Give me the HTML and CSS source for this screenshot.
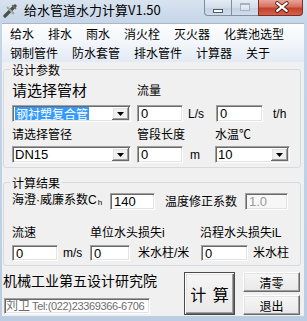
FILE: index.html
```html
<!DOCTYPE html>
<html lang="zh-CN">
<head>
<meta charset="utf-8">
<title>给水管道水力计算V1.50</title>
<link rel="stylesheet" href="styles.css">
</head>
<body>
<div class="window">
  <div class="titlebar">
    <svg class="app-icon" width="15" height="15" viewBox="0 0 15 15">
      <path d="M2 13 L12 3" stroke="#4b4f4b" stroke-width="3.2" stroke-linecap="round"/>
      <path d="M4 4 L11 11" stroke="#9aa79a" stroke-width="2"/>
      <path d="M9 2 L13 6" stroke="#6c746c" stroke-width="1.5"/>
    </svg>
    <span class="title">给水管道水力计算V1.50</span>
    <div class="caption">
      <div class="cb min"><span class="min-glyph"></span></div>
      <div class="cb max"><span class="max-glyph"></span></div>
      <div class="cb close">
        <svg width="45" height="16" viewBox="0 0 45 16">
          <path d="M19 3 L29 11 M29 3 L19 11" stroke="#4a1d16" stroke-width="4.2" stroke-linecap="round"/>
          <path d="M19 3 L29 11 M29 3 L19 11" stroke="#ffffff" stroke-width="2.4" stroke-linecap="round"/>
        </svg>
      </div>
    </div>
  </div>

  <div class="client">
    <div class="menubar">
      <div class="menu-row">
        <span class="mi">给水</span><span class="mi">排水</span><span class="mi">雨水</span><span class="mi">消火栓</span><span class="mi">灭火器</span><span class="mi">化粪池选型</span>
      </div>
      <div class="menu-row">
        <span class="mi">钢制管件</span><span class="mi">防水套管</span><span class="mi">排水管件</span><span class="mi">计算器</span><span class="mi">关于</span>
      </div>
    </div>

    <fieldset class="group g1">
      <legend>设计参数</legend>
      <div class="row lab-row-a">
        <span class="cell lab-big w125">请选择管材</span>
        <span class="cell">流量</span>
      </div>
      <div class="row ctl-row-a">
        <div class="combo w119"><span class="val"><span class="sel">钢衬塑复合管</span></span><span class="drop"><svg width="7" height="4" viewBox="0 0 7 4"><polygon points="0,0 7,0 3.5,4" fill="#000"/></svg></span></div>
        <div class="edit w46 ml6">0</div>
        <span class="cell unit ml5 w28">L/s</span>
        <div class="edit w47">0</div>
        <span class="cell unit ml10">t/h</span>
      </div>
      <div class="row lab-row-b">
        <span class="cell w125">请选择管径</span>
        <span class="cell w78">管段长度</span>
        <span class="cell">水温℃</span>
      </div>
      <div class="row ctl-row-b">
        <div class="combo w119"><span class="val">DN15</span><span class="drop"><svg width="7" height="4" viewBox="0 0 7 4"><polygon points="0,0 7,0 3.5,4" fill="#000"/></svg></span></div>
        <div class="edit w46 ml6">0</div>
        <span class="cell unit ml7 w25">m</span>
        <div class="combo w75"><span class="val">10</span><span class="drop"><svg width="7" height="4" viewBox="0 0 7 4"><polygon points="0,0 7,0 3.5,4" fill="#000"/></svg></span></div>
      </div>
    </fieldset>

    <fieldset class="group g2">
      <legend>计算结果</legend>
      <div class="row res-row-a">
        <span class="cell w98">海澄·威廉系数C<sub class="sub">h</sub></span>
        <div class="edit w45">140</div>
        <span class="cell ml10 w80">温度修正系数</span>
        <div class="edit w43 disabled">1.0</div>
      </div>
      <div class="row res-row-b">
        <span class="cell w78">流速</span>
        <span class="cell w110">单位水头损失i</span>
        <span class="cell">沿程水头损失iL</span>
      </div>
      <div class="row res-row-c">
        <div class="edit w46 short">0</div>
        <span class="cell unit ml5 w27">m/s</span>
        <div class="edit w40 short">0</div>
        <span class="cell ml8 w63">米水柱/米</span>
        <div class="edit w47 short">0</div>
        <span class="cell ml5">米水柱</span>
      </div>
    </fieldset>

    <div class="bottom">
      <div class="left-col">
        <div class="org">机械工业第五设计研究院</div>
        <div class="edit contact">刘卫 <span class="tel">Tel:(022)23369366-6706</span></div>
      </div>
      <div class="btn default calc">计 算</div>
      <div class="side-btns">
        <div class="btn small">清零</div>
        <div class="btn small">退出</div>
      </div>
    </div>
  </div>
</div>
</body>
</html>
```

FILE: styles.css
```css
* { box-sizing: border-box; }
html, body { margin: 0; padding: 0; }
body {
  width: 307px;
  height: 321px;
  overflow: hidden;
  font-family: "Liberation Sans", "Noto Sans CJK SC", sans-serif;
  font-size: 12px;
  color: #000;
}
.window {
  width: 307px;
  height: 321px;
  display: flex;
  flex-direction: column;
  padding: 0 3px 5px 2px;
  background: linear-gradient(to bottom, #d9e3ef 0px, #c6d5e8 22px, #bccde3 100%);
}

/* title bar */
.titlebar {
  flex: none;
  height: 23px;
  display: flex;
  align-items: flex-start;
}
.app-icon { margin: 3px 0 0 1px; flex: none; }
.title {
  margin-left: 6px;
  font-family: "Noto Sans CJK SC", sans-serif;
  font-size: 13px;
  line-height: 20px;
  color: #000;
}
.caption {
  margin-left: auto;
  margin-right: 1px;
  display: flex;
}
.cb {
  height: 16px;
  display: flex;
  align-items: center;
  justify-content: center;
  border: 1px solid #7d8ea6;
  border-top: none;
}
.min, .max {
  width: 27px;
  background: linear-gradient(to bottom, #e4ebf4 0%, #d3deeb 50%, #c2d1e3 51%, #d2dcea 100%);
}
.min { border-radius: 0 0 0 4px; border-right: none; }
.max { border-right: none; }
.min-glyph {
  width: 10px;
  height: 4px;
  margin-top: 7px;
  background: #fff;
  border: 1px solid #4c5a6e;
}
.max-glyph {
  width: 10px;
  height: 8px;
  margin-bottom: 2px;
  border: 1px solid #a4b2c4;
  border-top-width: 2px;
  background: rgba(255,255,255,0.35);
}
.close {
  width: 45px;
  border-color: #7a2e24;
  border-radius: 0 0 4px 0;
  background: linear-gradient(to bottom, #e7a598 0%, #d7705e 45%, #c4412c 55%, #d4614c 100%);
}

/* client */
.client {
  flex: 1;
  display: flex;
  flex-direction: column;
  background: #f0f0f0;
  min-height: 0;
}
.menubar {
  flex: none;
  border-top: 1px solid #a9b6c8;
  padding-left: 1px;
  background: linear-gradient(to bottom, #fcfdfe 0%, #f2f6fb 50%, #e3eaf4 100%);
}
.menu-row {
  display: flex;
  height: 19px;
  align-items: center;
}
.mi {
  padding: 0 7px;
  font-family: "Noto Sans CJK SC", sans-serif;
  font-size: 12px;
  line-height: 19px;
  white-space: nowrap;
}

/* group boxes */
.group {
  flex: none;
  margin: 0 3px 0 1px;
  padding: 5px 8px 4px 8px;
  border: 1px solid #d3dbe2;
  border-radius: 3px;
  min-width: 0;
}
.group legend {
  margin-left: -2px;
  padding: 0 2px;
  font-size: 12px;
  line-height: 15px;
  font-family: "Noto Sans CJK SC", sans-serif;
}
.g2 { margin-top: 7px; padding-top: 3px; }

.row {
  display: flex;
  align-items: center;
  white-space: nowrap;
}
.cell {
  flex: none;
  font-size: 12px;
  line-height: 14px;
}
.lab-big { font-size: 15px; line-height: 18px; }
.unit { font-size: 12px; }

.lab-row-a { height: 18px; }
.ctl-row-a { height: 17px; margin-top: 5px; }
.lab-row-b { height: 14px; margin-top: 6px; }
.ctl-row-b { height: 17px; margin-top: 4px; }

.res-row-a { height: 17px; }
.res-row-b { height: 14px; margin-top: 16px; }
.res-row-c { height: 16px; margin-top: 5px; }

.sub { font-size: 8px; vertical-align: -1px; margin-left: 1px; }

/* widths and spacing */
.w25 { width: 25px; }
.w27 { width: 27px; }
.w28 { width: 28px; }
.w40 { width: 40px; }
.w43 { width: 43px; }
.w45 { width: 45px; }
.w46 { width: 46px; }
.w47 { width: 47px; }
.w63 { width: 63px; }
.w75 { width: 75px; }
.w78 { width: 78px; }
.w80 { width: 80px; }
.w98 { width: 98px; }
.w110 { width: 110px; }
.w119 { width: 119px; }
.w125 { width: 125px; }
.ml5 { margin-left: 5px; }
.ml6 { margin-left: 6px; }
.ml7 { margin-left: 7px; }
.ml8 { margin-left: 8px; }
.ml10 { margin-left: 10px; }

/* sunken edit and combo */
.edit, .combo {
  flex: none;
  height: 17px;
  background: #fff;
  border: 1px solid;
  border-color: #a0a0a0 #ffffff #ffffff #a0a0a0;
  box-shadow: inset 1px 1px #696969, inset -1px -1px #e3e3e3;
}
.edit {
  display: flex;
  align-items: center;
  padding-left: 3px;
  font-size: 13px;
  line-height: 15px;
  white-space: nowrap;
  overflow: hidden;
}
.edit.short { height: 16px; }
.edit.disabled { background: #f7f7f7; color: #9a9a9a; }
.combo {
  display: flex;
  align-items: center;
  padding: 1px;
}
.combo .val {
  flex: 1;
  display: flex;
  align-items: center;
  height: 13px;
  padding-left: 1px;
  font-size: 13px;
  line-height: 13px;
  white-space: nowrap;
}
.sel {
  background: #3399ff;
  color: #fff;
  font-size: 12px;
  line-height: 13px;
  height: 13px;
  display: block;
  padding: 0 1px;
  font-family: "Noto Sans CJK SC", sans-serif;
}
.drop {
  flex: none;
  width: 17px;
  height: 13px;
  display: flex;
  align-items: center;
  justify-content: center;
  background: #f0f0f0;
  box-shadow: inset -1px -1px #696969, inset 1px 1px #ffffff, inset -2px -2px #a0a0a0, inset 2px 2px #e3e3e3;
}

/* bottom area */
.bottom {
  flex: none;
  display: flex;
  margin-top: 5px;
  padding-left: 1px;
}
.left-col { width: 181px; flex: none; }
.org {
  font-family: "Noto Sans CJK SC", sans-serif;
  font-size: 14px;
  line-height: 18px;
  white-space: nowrap;
}
.contact {
  margin-top: 9px;
  margin-left: 1px;
  width: 146px;
  height: 16px;
  color: #6d6d6d;
  font-size: 12px;
  padding-left: 1px;
}
.tel {
  font-size: 11px;
  letter-spacing: -0.35px;
  margin-left: 2px;
}
.btn {
  flex: none;
  display: flex;
  align-items: center;
  justify-content: center;
  background: linear-gradient(to bottom, #f6f6f6, #e8e8e8);
  border: 1px solid;
  border-color: #ffffff #696969 #696969 #ffffff;
  box-shadow: inset -1px -1px #a0a0a0, inset 1px 1px #e3e3e3;
  font-family: "Noto Sans CJK SC", sans-serif;
  white-space: nowrap;
}
.btn.default {
  border: 1px solid #4a4a4a;
  box-shadow: inset 1px 1px #ffffff, inset -1px -1px #696969, inset -2px -2px #a0a0a0, inset 2px 2px #e3e3e3;
}
.calc {
  width: 51px;
  height: 43px;
  margin-top: 1px;
  font-size: 16px;
  word-spacing: 3px;
}
.side-btns {
  margin-left: 8px;
  margin-top: 1px;
  display: flex;
  flex-direction: column;
  gap: 3px;
}
.btn.small {
  width: 57px;
  height: 20px;
  font-size: 12px;
}
```
